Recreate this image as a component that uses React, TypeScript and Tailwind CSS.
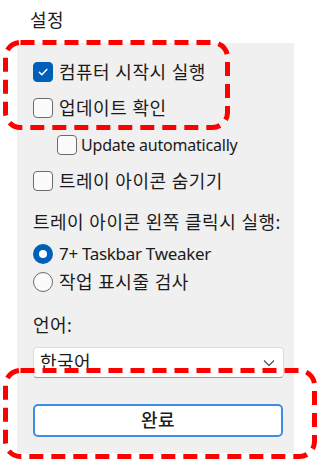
import { useState } from 'react';

const font = { fontFamily: "'Noto Sans', 'Noto Sans CJK KR', sans-serif" };

const CheckBox = ({ checked, onClick }: { checked: boolean; onClick: () => void }) => (
  <span
    onClick={onClick}
    className={`flex h-[20px] w-[20px] shrink-0 items-center justify-center rounded-[4px] border-[1.5px] ${
      checked ? 'border-[#005fb8] bg-[#005fb8]' : 'border-[#6b6b6b] bg-[#fbfbfb]'
    }`}
  >
    {checked && (
      <svg width="12" height="12" viewBox="0 0 12 12" fill="none">
        <path d="M2.3 6.3 4.8 8.7 9.8 3.4" stroke="#ffffff" strokeWidth="1.5" strokeLinecap="round" strokeLinejoin="round" />
      </svg>
    )}
  </span>
);

const Radio = ({ checked }: { checked: boolean }) => (
  <span
    className={`flex h-[20px] w-[20px] shrink-0 items-center justify-center rounded-full ${
      checked ? 'bg-[#005fb8]' : 'border-[1.5px] border-[#6b6b6b] bg-[#fbfbfb]'
    }`}
  >
    {checked && <span className="h-[8px] w-[8px] rounded-full bg-white" />}
  </span>
);

const App = () => {
  const [autostart, setAutostart] = useState(true);
  const [checkUpdates, setCheckUpdates] = useState(false);
  const [autoUpdate, setAutoUpdate] = useState(false);
  const [hideTray, setHideTray] = useState(false);
  const [trayAction, setTrayAction] = useState(0);

  const ko = 'text-[18px] tracking-[0.5px]';

  return (
    <div className="relative h-[461px] w-[320px] overflow-hidden bg-white text-[17px] text-[#1b1b1b]" style={font}>
      <div className={`h-[43px] pl-[30px] pt-[8px] leading-[24px] ${ko}`}>설정</div>

      <div className="ml-[17px] w-[277px] bg-[#f0f0f0] pl-[16px] pr-[10px] pt-[11px] pb-[16px]">
        <label className="flex h-[36px] items-center gap-[6px]">
          <CheckBox checked={autostart} onClick={() => setAutostart(!autostart)} />
          <span className={ko}>컴퓨터 시작시 실행</span>
        </label>
        <label className="flex h-[36px] items-center gap-[6px]">
          <CheckBox checked={checkUpdates} onClick={() => setCheckUpdates(!checkUpdates)} />
          <span className={ko}>업데이트 확인</span>
        </label>
        <label className="flex h-[37px] items-center gap-[4px] pl-[24px]">
          <CheckBox checked={autoUpdate} onClick={() => setAutoUpdate(!autoUpdate)} />
          <span className="text-[16px] tracking-[-0.2px]">Update automatically</span>
        </label>
        <label className="flex h-[36px] items-center gap-[6px]">
          <CheckBox checked={hideTray} onClick={() => setHideTray(!hideTray)} />
          <span className={ko}>트레이 아이콘 숨기기</span>
        </label>

        <div className={`mt-[5px] flex h-[36px] items-center whitespace-nowrap ${ko}`}>트레이 아이콘 왼쪽 클릭시 실행:</div>
        <label className="flex h-[28px] items-center gap-[6px]" onClick={() => setTrayAction(0)}>
          <Radio checked={trayAction === 0} />
          <span className="tracking-[-0.3px]">7+ Taskbar Tweaker</span>
        </label>
        <label className="flex h-[28px] items-center gap-[6px]" onClick={() => setTrayAction(1)}>
          <Radio checked={trayAction === 1} />
          <span className={ko}>작업 표시줄 검사</span>
        </label>

        <div className={`mt-[11px] flex h-[36px] items-center ${ko}`}>언어:</div>
        <div className="mt-[4px] flex h-[31px] w-[251px] items-center justify-between rounded-[4px] border border-[#dcdcdc] border-b-[#9a9a9a] bg-white pl-[6px] pr-[8px]">
          <span className={ko}>한국어</span>
          <svg width="12" height="8" viewBox="0 0 12 8" fill="none">
            <path d="M1 1.5 6 6.5 11 1.5" stroke="#5a5a5a" strokeWidth="1.3" />
          </svg>
        </div>

        <button className={`mt-[26px] flex h-[33px] w-[250px] items-center justify-center rounded-[5px] border-2 border-[#3b8ee2] bg-white font-medium ${ko}`}>
          완료
        </button>
      </div>

      <svg className="pointer-events-none absolute left-0 top-0" width="320" height="461">
        <rect x="5.5" y="42.5" width="222" height="85" rx="15" fill="none" stroke="#ff0000" strokeWidth="5" strokeDasharray="14 8" />
        <rect x="5.5" y="370.5" width="309" height="86" rx="15" fill="none" stroke="#ff0000" strokeWidth="5" strokeDasharray="14 8" />
      </svg>
    </div>
  );
};

export default App;
